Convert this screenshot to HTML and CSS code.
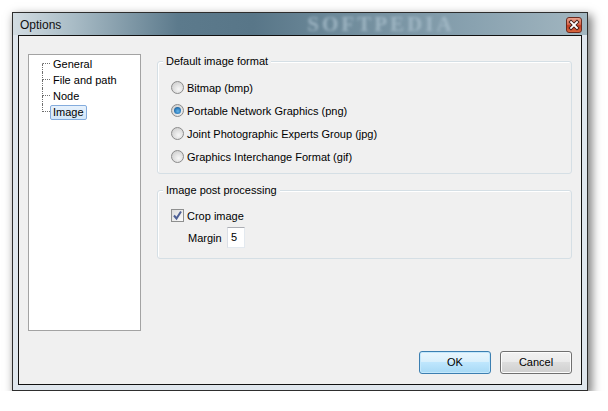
FILE: index.html
```html
<!DOCTYPE html>
<html>
  <head>
    <title>Options</title>
    <link rel="stylesheet" href="styles.css">
  </head>
  <body>
    <div class="window">
      <div class="titlebar">
        <span class="title">Options</span>
        <span class="mark">SOFTPEDIA</span>
        <span class="close">
          <svg width="14" height="14" viewBox="0 0 14 14">
            <path d="M4 4 L10 10 M10 4 L4 10" stroke="#3a1a14" stroke-width="3.6" stroke-linecap="square"/>
            <path d="M4 4 L10 10 M10 4 L4 10" stroke="#fff" stroke-width="1.8" stroke-linecap="square"/>
          </svg>
        </span>
      </div>
      <div class="frame">
        <div class="client">
          <div class="main">
            <ul class="tree">
              <li class="first"><span class="branch"><span class="up"></span><span class="down"></span></span><span class="node">General</span></li>
              <li><span class="branch"><span class="up"></span><span class="down"></span></span><span class="node">File and path</span></li>
              <li><span class="branch"><span class="up"></span><span class="down"></span></span><span class="node">Node</span></li>
              <li class="last"><span class="branch"><span class="up"></span><span class="down"></span></span><span class="node selected">Image</span></li>
            </ul>

            <div class="panels">
              <div class="group group-format">
                <span class="legend">Default image format</span>
                <div class="options">
                  <div class="option"><span class="radio"></span>Bitmap (bmp)</div>
                  <div class="option"><span class="radio checked"><span class="dot"></span></span>Portable Network Graphics (png)</div>
                  <div class="option"><span class="radio"></span>Joint Photographic Experts Group (jpg)</div>
                  <div class="option"><span class="radio"></span>Graphics Interchange Format (gif)</div>
                </div>
              </div>

              <div class="group group-post">
                <span class="legend">Image post processing</span>
                <div class="check-row">
                  <span class="checkbox">
                    <svg width="11" height="11" viewBox="0 0 11 11">
                      <path d="M2 5.5 L4.5 8.5 L9 1.5" fill="none" stroke="#4d5f95" stroke-width="2"/>
                    </svg>
                  </span>
                  Crop image
                </div>
                <div class="margin-row">
                  <span class="label">Margin</span>
                  <span class="textbox">5</span>
                </div>
              </div>
            </div>
          </div>

          <div class="buttons">
            <span class="btn default">OK</span>
            <span class="btn">Cancel</span>
          </div>
        </div>
      </div>
    </div>
  </body>
</html>
```

FILE: styles.css
```css
body {
  margin: 0;
  background: #fff;
  font-family: "Liberation Sans", Arial, sans-serif;
  font-size: 11px;
  color: #000;
}

.window {
  margin: 12px 0 0 12px;
  width: 576px;
  height: 379px;
  box-sizing: border-box;
  border: 1px solid #2e2e2e;
  background: #dfe6ed;
  box-shadow: 3px 4px 9px 1px rgba(0, 0, 0, 0.5);
  display: flex;
  flex-direction: column;
}

/* title bar */
.titlebar {
  height: 22px;
  display: flex;
  align-items: flex-start;
  background: linear-gradient(90deg, #d2dce2 0px, #a9bcc6 60px, #5c7a8c 165px, #587688 240px, #6f8b9b 330px, #89a2b0 460px, #a2b6c0 574px);
}
.title {
  margin: 4px 0 0 7px;
  font-size: 12px;
  line-height: 16px;
  color: #111;
}
.mark {
  margin: 1px 0 0 246px;
  font-family: "Liberation Serif", serif;
  font-weight: bold;
  font-size: 21px;
  letter-spacing: 3px;
  line-height: 20px;
  color: #a9bfcc;
  filter: blur(1.4px);
  opacity: 0.8;
}
.close {
  margin: 4px 5px 0 auto;
  width: 16px;
  height: 16px;
  box-sizing: border-box;
  border: 1px solid #6b2a1e;
  border-radius: 3px;
  background: linear-gradient(#eaa28e, #d86a4f 45%, #c2391f 55%, #d9683f);
  display: flex;
  align-items: center;
  justify-content: center;
}

.frame {
  flex: 1;
  display: flex;
  padding: 0 5px 5px 5px;
}
.client {
  flex: 1;
  border: 1px solid #111;
  background: #f0f0f0;
  display: flex;
  flex-direction: column;
  padding: 18px 9px 10px 9px;
}
.main {
  flex: 1;
  display: flex;
}

/* tree */
.tree {
  list-style: none;
  margin: 0;
  padding: 1px 0 0 0;
  width: 113px;
  height: 277px;
  box-sizing: border-box;
  border: 1px solid #a3a3a3;
  background: #fff;
}
.tree li {
  display: flex;
  height: 16px;
  align-items: center;
}
.branch {
  margin-left: 13px;
  width: 8px;
  height: 16px;
  display: flex;
  flex-direction: column;
}
.up {
  height: 7px;
  border-left: 1px dotted #6f6f6f;
  border-bottom: 1px dotted #6f6f6f;
}
.down {
  height: 8px;
  border-left: 1px dotted #6f6f6f;
}
.first .up {
  border-left-color: transparent;
}
.last .down {
  border-left-color: transparent;
}
.node {
  padding: 0 2px;
  border: 1px solid transparent;
  line-height: 13px;
}
.node.selected {
  border-color: #84acdd;
  border-radius: 2px;
  background: linear-gradient(#e6f1fc, #d3e7fa);
}

/* group boxes */
.panels {
  margin-left: 16px;
  flex: 1;
  padding-top: 7px;
}
.group {
  box-sizing: border-box;
  border: 1px solid #d5dfe5;
  border-radius: 3px;
  box-shadow: inset 1px 1px 0 #fff;
}
.group-format {
  height: 113px;
}
.group-post {
  margin-top: 16px;
  height: 69px;
}
.legend {
  display: block;
  width: fit-content;
  margin: -7px 0 0 5px;
  padding: 0 3px;
  line-height: 13px;
  background: #f0f0f0;
}

.options {
  margin-top: 8px;
  padding-left: 13px;
}
.option {
  height: 23px;
  display: flex;
  align-items: center;
}
.radio {
  width: 13px;
  height: 13px;
  box-sizing: border-box;
  margin-right: 3px;
  border: 1px solid #8b8b8b;
  border-radius: 50%;
  background: radial-gradient(circle at 60% 65%, #f7f7f7, #d0d0d0 80%);
  display: flex;
  align-items: center;
  justify-content: center;
}
.dot {
  width: 7px;
  height: 7px;
  border-radius: 50%;
  background: radial-gradient(circle at 55% 60%, #67b7ea, #2a78b8 55%, #173f63);
}

.check-row {
  margin: 10px 0 0 13px;
  height: 17px;
  display: flex;
  align-items: center;
}
.checkbox {
  width: 13px;
  height: 13px;
  box-sizing: border-box;
  margin-right: 3px;
  border: 1px solid #8e8f8f;
  background: linear-gradient(135deg, #dcdcdc, #fbfbfb);
  display: flex;
  align-items: center;
  justify-content: center;
}
.margin-row {
  margin: 3px 0 0 30px;
  display: flex;
  align-items: center;
}
.label {
  width: 39px;
}
.textbox {
  width: 18px;
  height: 21px;
  box-sizing: border-box;
  padding-left: 3px;
  border: 1px solid #e3e9ef;
  border-top-color: #abadb3;
  border-left-color: #dbdfe6;
  background: #fff;
  line-height: 19px;
}

/* buttons */
.buttons {
  display: flex;
  justify-content: flex-end;
  gap: 9px;
}
.btn {
  width: 72px;
  height: 23px;
  box-sizing: border-box;
  border: 1px solid #707070;
  border-radius: 3px;
  background: linear-gradient(#f2f2f2 0%, #ebebeb 45%, #dddddd 50%, #cfcfcf 100%);
  box-shadow: inset 0 0 0 1px #fcfcfc;
  text-align: center;
  line-height: 21px;
}
.btn.default {
  border-color: #3c7fb1;
  background: linear-gradient(#eaf6fd 0%, #d9f0fc 45%, #bee6fd 50%, #a7d9f5 100%);
  box-shadow: inset 0 0 0 1px #c4e8fc;
}
```
